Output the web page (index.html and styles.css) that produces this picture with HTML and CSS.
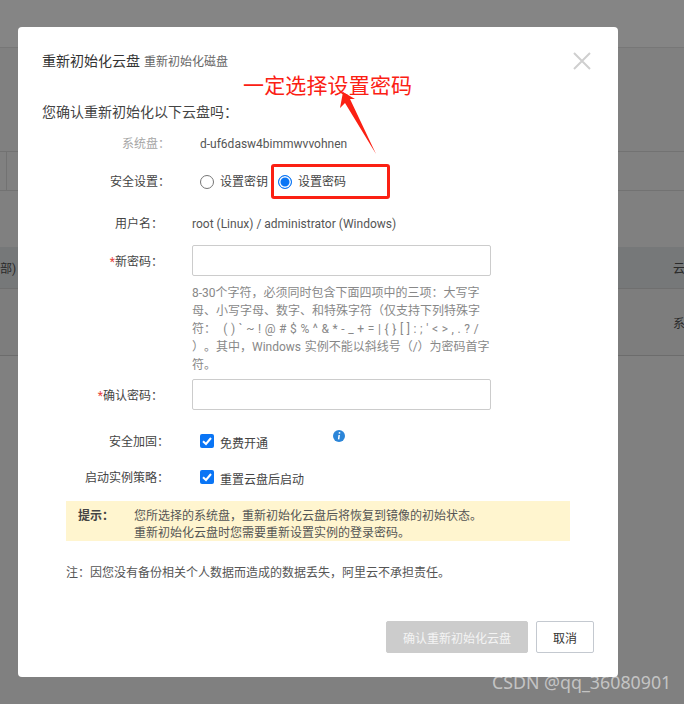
FILE: index.html
```html
<!DOCTYPE html>
<html lang="zh">
<head>
<meta charset="utf-8">
<title>重新初始化云盘</title>
<link rel="stylesheet" href="styles.css">
</head>
<body>
<div class="page">
  <div class="page-top"></div>
  <div class="page-gap"></div>
  <div class="page-head"><span class="head-cell"></span></div>
  <div class="page-gap2"></div>
  <div class="page-row page-row-dark"><span>部)</span><span>云</span></div>
  <div class="page-row page-row-light"><span></span><span>系</span></div>
</div>

<section class="dialog">
  <header class="dialog-head">
    <h1 class="dialog-title">重新初始化云盘</h1>
    <span class="dialog-sub">重新初始化磁盘</span>
  </header>
  <svg class="close" width="18" height="18" viewBox="0 0 18 18"><path d="M1 1 L17 17 M17 1 L1 17" stroke="#cfcfcf" stroke-width="2" fill="none"/></svg>
  <p class="confirm">您确认重新初始化以下云盘吗：</p>

  <div class="row row-disk">
    <span class="label label-wide label-muted">系统盘：</span>
    <span class="value value-disk">d-uf6dasw4bimmwvvohnen</span>
  </div>
  <div class="row row-security">
    <span class="label label-wide">安全设置：</span>
    <div class="radios">
      <span class="radio"></span><span class="radio-text">设置密钥</span>
      <span class="radio radio-on"></span><span class="radio-text">设置密码</span>
    </div>
  </div>
  <div class="row row-user">
    <span class="label">用户名：</span>
    <span class="value">root (Linux) / administrator (Windows)</span>
  </div>
  <div class="row row-pass">
    <span class="label label-input"><i class="req">*</i>新密码：</span>
    <div class="field">
      <div class="input"></div>
      <p class="hint">8-30个字符，必须同时包含下面四项中的三项：大写字母、小写字母、数字、和特殊字符（仅支持下列特殊字符：&nbsp; ( ) ` ~ ! @ # $ % ^ &amp; * - _ + = | { } [ ] : ; ' &lt; &gt; , . ? /<br>）。其中，Windows 实例不能以斜线号（/）为密码首字符。</p>
    </div>
  </div>
  <div class="row row-confirm">
    <span class="label label-input"><i class="req">*</i>确认密码：</span>
    <div class="field"><div class="input"></div></div>
  </div>
  <div class="row row-harden">
    <span class="label label-harden">安全加固：</span>
    <div class="check-line">
      <svg class="check" width="14" height="14" viewBox="0 0 14 14"><rect width="14" height="14" rx="2" fill="#0a75f5"/><path d="M3 7.2 L6 10 L11 4" stroke="#fff" stroke-width="2" fill="none"/></svg>
      <span class="check-text">免费开通</span>
      <svg class="info" width="12" height="12" viewBox="0 0 12 12"><circle cx="6" cy="6" r="6" fill="#2b85d8"/><path d="M6.6 2.2 L6.4 3.6 M6.2 5 L5.6 9.4" stroke="#fff" stroke-width="1.5" fill="none"/></svg>
    </div>
  </div>
  <div class="row row-start">
    <span class="label label-harden">启动实例策略：</span>
    <div class="check-line">
      <svg class="check" width="14" height="14" viewBox="0 0 14 14"><rect width="14" height="14" rx="2" fill="#0a75f5"/><path d="M3 7.2 L6 10 L11 4" stroke="#fff" stroke-width="2" fill="none"/></svg>
      <span class="check-text">重置云盘后启动</span>
    </div>
  </div>

  <div class="tip">
    <strong class="tip-label">提示：</strong>
    <p class="tip-body">您所选择的系统盘，重新初始化云盘后将恢复到镜像的初始状态。<br>重新初始化云盘时您需要重新设置实例的登录密码。</p>
  </div>
  <p class="note">注：因您没有备份相关个人数据而造成的数据丢失，阿里云不承担责任。</p>

  <footer class="actions">
    <button class="btn btn-primary" type="button">确认重新初始化云盘</button>
    <button class="btn btn-cancel" type="button">取消</button>
  </footer>
</section>

<div class="note-title">一定选择设置密码</div>
<svg class="note-arrow" width="40" height="68" viewBox="0 0 40 68"><path d="M4 2 L16 9 L11 9 L37 64 L6 13 L1 18 Z" fill="#fb2013"/></svg>
<div class="note-box"></div>
<div class="watermark">CSDN @qq_36080901</div>
</body>
</html>
```
FILE: styles.css
```css
* { box-sizing: border-box; }
html, body { margin: 0; padding: 0; }
body {
  width: 684px;
  height: 704px;
  overflow: hidden;
  position: relative;
  background: #808080;
  font-family: Roboto, "Noto Sans CJK SC", sans-serif;
  font-size: 12px;
  color: #333;
  text-spacing-trim: space-all;
}
.page { display: flex; flex-direction: column; }
.page-top { height: 47px; background: #858585; border-bottom: 1px solid #777; box-sizing: content-box; }
.page-gap { height: 103px; }
.page-head { height: 38px; border-top: 1px solid #727272; border-bottom: 1px solid #727272; box-sizing: content-box; }
.head-cell { display: block; width: 7px; height: 100%; border-right: 1px solid #727272; }
.page-gap2 { height: 56px; }
.page-row {
  display: flex;
  justify-content: space-between;
  align-items: center;
  color: #2a2a2a;
}
.page-row span:last-child { width: 11px; overflow: hidden; white-space: nowrap; }
.page-row-dark { height: 41px; background: #767879; border-bottom: 1px solid #6f6f6f; box-sizing: content-box; }
.page-row-light { height: 66px; background: #7d7d7d; border-bottom: 1px solid #6c6c6c; box-sizing: content-box; }

.dialog {
  position: absolute;
  left: 18px;
  top: 27px;
  width: 600px;
  height: 650px;
  background: #fff;
  border-radius: 4px;
  padding: 0 24px;
  display: flex;
  flex-direction: column;
}
.dialog-head { display: flex; align-items: baseline; height: 24px; margin-top: 22px; }
.dialog-title { margin: 0; font-size: 14px; font-weight: 400; color: #333; line-height: 24px; }
.dialog-sub { margin-left: 4px; font-size: 12px; color: #666; line-height: 24px; }
.close { position: absolute; left: 555px; top: 25px; }
.confirm { margin: 29px 0 0; height: 20px; font-size: 14px; line-height: 20px; color: #444; }

.row { display: flex; align-items: flex-start; }
.label { width: 121px; flex: none; text-align: right; line-height: 18px; color: #444; }
.label-wide { width: 128px; margin-right: -7px; }
.label-harden { width: 127px; margin-right: -6px; }
.label-muted { color: #a6a6a6; }
.label-input { padding-top: 8px; }
.req { font-style: normal; color: #e8433a; }
.value { margin-left: 29px; line-height: 18px; color: #555; }
.value-disk { margin-left: 37px; }
.row-disk { margin-top: 13px; }
.row-security { margin-top: 20px; }
.row-user { margin-top: 24px; }
.row-pass { margin-top: 12px; }
.row-confirm { margin-top: 5px; }
.row-harden { margin-top: 23px; }
.row-start { margin-top: 18px; }

.radios { margin-left: 37px; display: flex; align-items: center; height: 18px; }
.radio { width: 14px; height: 14px; border-radius: 50%; border: 1px solid #767676; flex: none; background: #fff; }
.radio-on { border: 1px solid #0a75f5; background: #0a75f5; box-shadow: inset 0 0 0 1.5px #fff; margin-left: 10px; }
.radio-text { margin-left: 6px; color: #444; line-height: 18px; }

.field { margin-left: 29px; width: 299px; }
.input { height: 31px; border: 1px solid #ccc; border-radius: 2px; background: #fff; }
.hint { margin: 8px 0 0; width: 299px; line-height: 18px; color: #888; font-size: 12px; word-spacing: 0.65px; }

.check-line { margin-left: 37px; display: flex; position: relative; height: 18px; }
.check { margin-top: 1px; flex: none; }
.check-text { margin-left: 6px; margin-top: 2px; line-height: 18px; color: #444; }
.info { position: absolute; left: 133px; top: -3px; }

.tip {
  margin-top: 14px;
  margin-left: 24px;
  width: 504px;
  height: 40px;
  background: #fff5cf;
  display: flex;
  padding: 7px 0 0 12px;
  line-height: 17px;
}
.tip-label { width: 56px; flex: none; font-weight: 700; color: #444; }
.tip-body { margin: 0; color: #555; }
.note { margin: 23px 0 0 24px; line-height: 18px; color: #555; }
.actions { position: absolute; right: 24px; top: 594px; display: flex; gap: 8px; }
.btn { height: 32px; border-radius: 2px; font: inherit; padding: 0; }
.btn-primary { width: 142px; background: #ccc; border: 1px solid #ccc; color: #f4f4f4; }
.btn-cancel { width: 58px; background: #fff; border: 1px solid #c4c9d0; color: #333; }

.note-title {
  position: absolute;
  left: 243px;
  top: 69px;
  font-family: "Noto Sans CJK SC", sans-serif;
  font-size: 21px;
  line-height: 30px;
  color: #fb2013;
  letter-spacing: 0.15px;
  white-space: nowrap;
}
.note-arrow { position: absolute; left: 339px; top: 90px; }
.note-box {
  position: absolute;
  left: 271px;
  top: 164px;
  width: 119px;
  height: 35px;
  border: 3px solid #fb2013;
  border-radius: 3px;
}
.watermark {
  position: absolute;
  left: 492px;
  top: 670px;
  font-family: "Noto Sans", sans-serif;
  font-size: 17.8px;
  line-height: 24px;
  color: rgba(255,255,255,0.55);
  white-space: nowrap;
}
```
